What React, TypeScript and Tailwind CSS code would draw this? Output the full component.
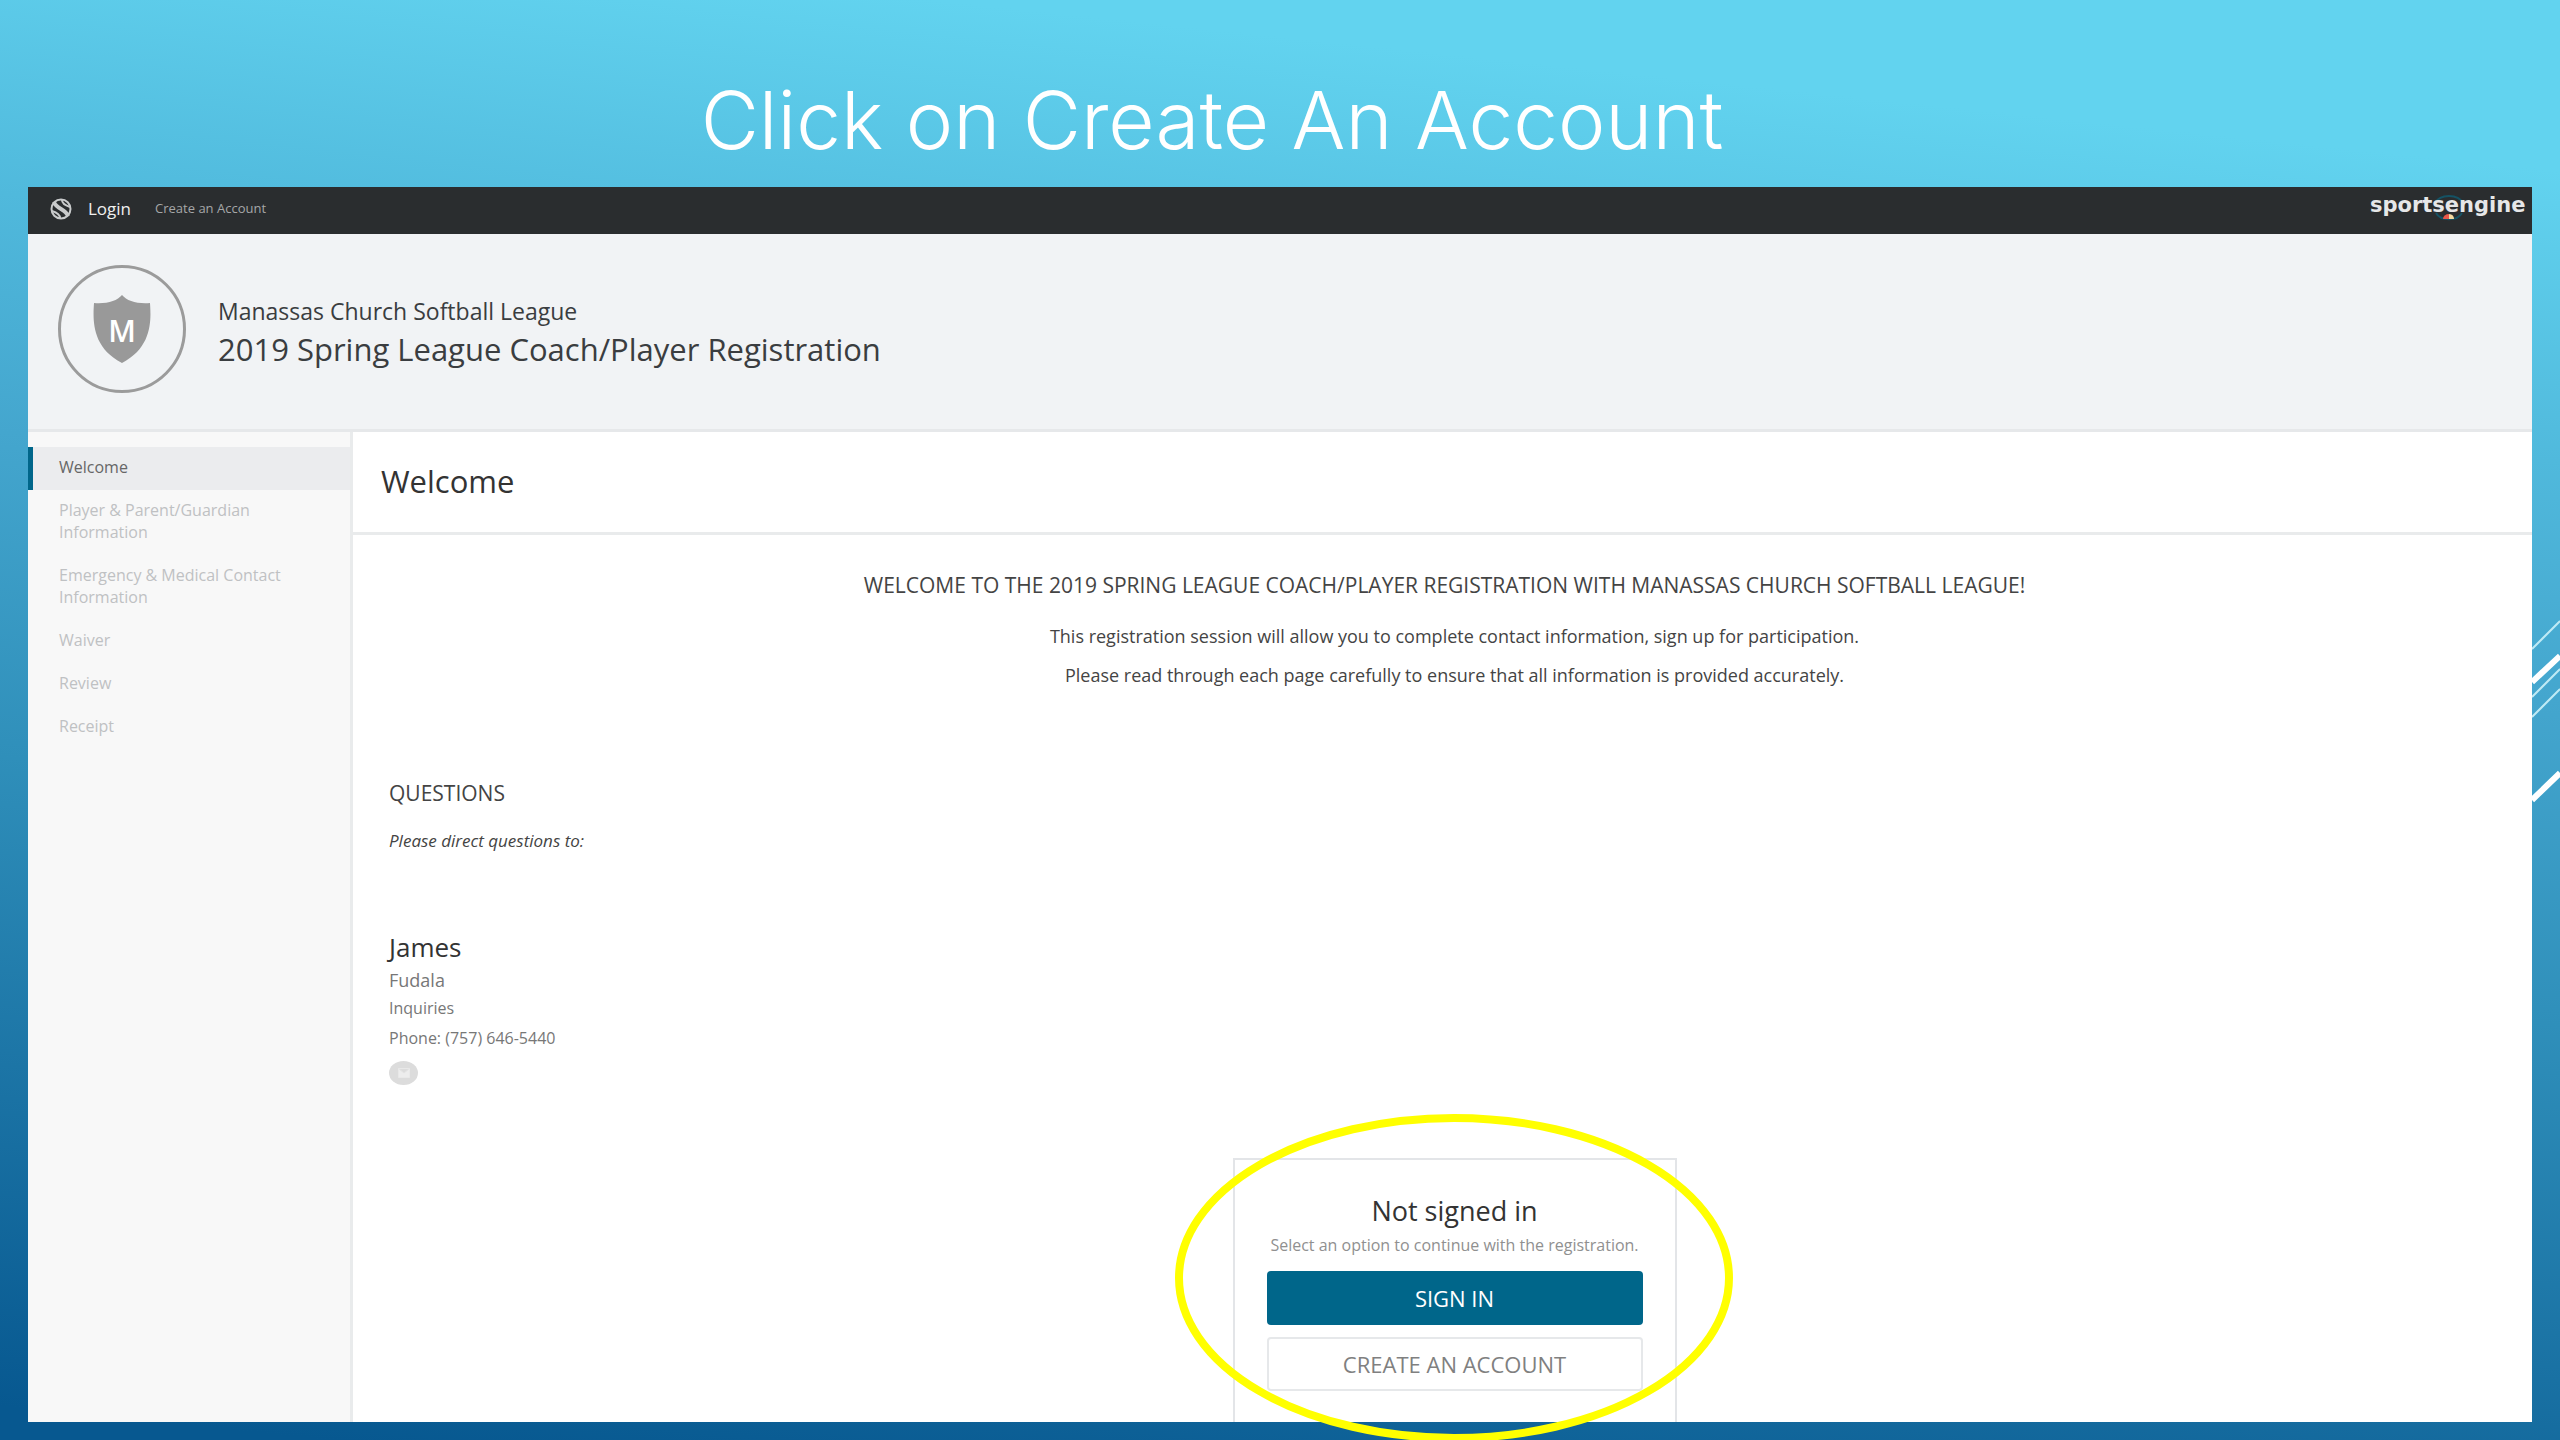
import React from 'react';

interface Step {
  label: string;
  active?: boolean;
}

const steps: Step[] = [
  { label: 'Welcome', active: true },
  { label: 'Player & Parent/Guardian Information' },
  { label: 'Emergency & Medical Contact Information' },
  { label: 'Waiver' },
  { label: 'Review' },
  { label: 'Receipt' },
];

const BallIcon: React.FC = () => (
  <svg className="size-[22px]" viewBox="0 0 22 22" fill="none">
    <circle cx="11" cy="11" r="9.500" stroke="#c9cbcc" strokeWidth="2" />
    <path d="M4 4C6 11 16 11 18 18" stroke="#c9cbcc" strokeWidth="4" />
    <path d="M12 2C12 6 17 8 20 9M2 13C5 14 10 16 10 20" stroke="#c9cbcc" strokeWidth="2" />
  </svg>
);

const TeamBadge: React.FC = () => (
  <div className="flex size-32 shrink-0 items-center justify-center rounded-full border-3 border-[#9b9b9b]">
    <div className="relative">
      <svg className="h-[68px] w-[58px]" viewBox="0 0 58 68" fill="#999">
        <path d="M29 0C34 6 44 9 57 8C58 24 60 52 29 68C-2 52 0 24 1 8C14 9 24 6 29 0Z" />
      </svg>
      <span className="absolute inset-0 flex items-center justify-center pt-1 text-3xl font-semibold text-white">M</span>
    </div>
  </div>
);

const SportsEngineLogo: React.FC = () => (
  <svg className="h-8 w-[156px]" viewBox="0 0 156 32" role="img" aria-label="sportsengine">
    <path d="M65 10a15 11 0 0 1 28 0M66 20a14 10 0 0 0 26 0" fill="none" stroke="#155264" strokeWidth="2" />
    <text x="0" y="19" fill="#e6e7e8" fontFamily="DejaVu Sans" fontWeight="bold" fontSize="21">sportsengine</text>
    <path d="M73 26a6 5 0 0 1 6-5v5z" fill="#e8584a" />
    <path d="M79 21a6 5 0 0 1 5 5h-5z" fill="#f3d9a0" />
  </svg>
);

const TopBar: React.FC = () => (
  <nav className="flex h-[47px] items-center bg-[#2a2d2f] pr-[6px] pb-1 pl-[22px]">
    <BallIcon />
    <a href="#" className="ml-4 text-[17px] text-[#f0f0f0]">Login</a>
    <a href="#" className="ml-6 text-[13px] text-[#a5a7a8]">Create an Account</a>
    <div className="ml-auto">
      <SportsEngineLogo />
    </div>
  </nav>
);

const Sidebar: React.FC = () => (
  <aside className="w-[325px] shrink-0 border-r-3 border-[#e9ebec] bg-[#f8f8f8] pt-[15px]">
    <ul>
      {steps.map((step) => (
        <li key={step.label}>
          <a
            href="#"
            className={`block border-l-5 pt-[9px] pr-16 pb-3 pl-[26px] text-base leading-[22px] ${
              step.active ? 'border-[#00668a] bg-[#ebecee] text-[#666]' : 'border-transparent text-[#bfc1c3]'
            }`}
          >
            {step.label}
          </a>
        </li>
      ))}
    </ul>
  </aside>
);

const SignInCard: React.FC = () => (
  <div className="relative mx-auto w-[444px] border-2 border-b-0 border-[#e3e5e8] px-8 pt-[31px] pb-[31px] text-center">
    <h3 className="text-[27px] leading-10 text-[#333]">Not signed in</h3>
    <p className="text-base leading-7 text-[#909090]">Select an option to continue with the registration.</p>
    <button type="button" className="mt-3 block h-[54px] w-full rounded-sm bg-[#00668a] text-[22px] text-white">
      SIGN IN
    </button>
    <button type="button" className="mt-3 block h-[54px] w-full rounded-sm border-2 border-[#e6e8ea] text-[22px] text-[#808080]">
      CREATE AN ACCOUNT
    </button>
    {/* Highlight ring */}
    <svg className="pointer-events-none absolute -top-[46px] -left-[63px] h-[328px] w-[564px]" viewBox="0 0 564 328" fill="none">
      <ellipse cx="282" cy="164" rx="275" ry="160" stroke="#ffff00" strokeWidth="8" />
    </svg>
  </div>
);

const App: React.FC = () => {
  return (
    <div className="relative flex min-h-screen flex-col overflow-hidden bg-[linear-gradient(186deg,#62d3ef_10%,#50b9dc_27%,#44a6ce_41%,#2f8fba_60%,#075890_98%)] px-7 pb-[18px] font-['Open_Sans',sans-serif]">
      <svg className="absolute top-[600px] right-0 h-52 w-7" viewBox="0 0 28 208" stroke="#fff">
        <path d="M0 49L28 21M0 97L28 69M0 117L28 89" stroke="#bfeaf5" strokeWidth="2" />
        <path d="M0 82L28 56M0 200L28 173" strokeWidth="6" />
      </svg>
      <h1 className="flex h-[187px] items-center justify-center pt-[52px] pr-[136px] font-['Inter',sans-serif] text-[80px] font-light text-white">
        Click on Create An Account
      </h1>
      <div className="flex grow flex-col bg-white text-[#444]">
        <TopBar />
        <header className="flex h-[198px] items-center gap-8 border-b-3 border-[#e6e8ea] bg-[#f1f3f5] px-[30px] pb-[6px]">
          <TeamBadge />
          <div className="pt-1 text-[#3a3d40]">
            <p className="text-[23px] leading-9">Manassas Church Softball League</p>
            <h2 className="text-[31px] leading-10">2019 Spring League Coach/Player Registration</h2>
          </div>
        </header>
        <div className="flex grow">
          <Sidebar />
          <main className="flex grow flex-col">
            <h2 className="border-b-3 border-[#e9ebec] px-7 pt-[27px] pb-7 text-[31px] leading-[45px] text-[#333]">Welcome</h2>
            <div className="flex grow flex-col pt-[34px] pr-3 pl-9">
              <div className="text-center">
                <h3 className="pr-5 text-[21px] leading-8">
                  WELCOME TO THE 2019 SPRING LEAGUE COACH/PLAYER REGISTRATION WITH MANASSAS CHURCH SOFTBALL LEAGUE!
                </h3>
                <p className="mt-4 text-lg leading-[39px]">
                  This registration session will allow you to complete contact information, sign up for participation.
                </p>
                <p className="text-lg leading-[39px]">
                  Please read through each page carefully to ensure that all information is provided accurately.
                </p>
              </div>
              <h3 className="mt-[82px] text-[21px] leading-8">QUESTIONS</h3>
              <p className="mt-4 text-[17px] leading-8 italic">Please direct questions to:</p>
              <h4 className="mt-[70px] text-[26px] leading-10 text-[#333]">James</h4>
              <p className="text-lg leading-[26px] text-[#777]">Fudala</p>
              <p className="text-base leading-[30px] text-[#777]">Inquiries</p>
              <p className="text-base leading-[30px] text-[#777]">Phone: (757) 646-5440</p>
              <a href="#" aria-label="Send email" className="mt-2 flex h-6 w-[29px] items-center justify-center rounded-[50%] bg-[#dcdcdc]">
                <svg className="h-[10px] w-3" viewBox="0 0 12 10" fill="#ededed" stroke="#e4e4e4">
                  <path d="M0 0H12V10H0ZM1 1L6 5L11 1" />
                </svg>
              </a>
              <div className="mt-auto">
                <SignInCard />
              </div>
            </div>
          </main>
        </div>
      </div>
    </div>
  );
};

export default App;
